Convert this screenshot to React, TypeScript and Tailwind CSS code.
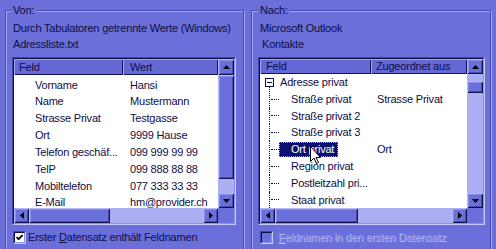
type Dir = "up" | "down" | "left" | "right";

function Arrow({ dir }: { dir: Dir }) {
  if (dir === "up" || dir === "down") {
    return (
      <svg width="7" height="4" viewBox="0 0 7 4">
        <polygon points={dir === "up" ? "3.5,0 7,4 0,4" : "0,0 7,0 3.5,4"} fill="#000" />
      </svg>
    );
  }
  return (
    <svg width="4" height="7" viewBox="0 0 4 7">
      <polygon points={dir === "left" ? "4,0 4,7 0,3.5" : "0,0 4,3.5 0,7"} fill="#000" />
    </svg>
  );
}

function ScrollButton({ dir, className }: { dir: Dir; className: string }) {
  return (
    <div
      className={`flex shrink-0 items-center justify-center bg-[#6b6fd9] shadow-[inset_1px_1px_0_#b3b6f6,inset_-1px_-1px_0_#12124e,inset_2px_2px_0_#8a8de8,inset_-2px_-2px_0_#474bb0] ${className}`}
    >
      <Arrow dir={dir} />
    </div>
  );
}

function Thumb({ className }: { className: string }) {
  return (
    <div
      className={`shrink-0 bg-[#6b6fd9] shadow-[inset_1px_1px_0_#b3b6f6,inset_-1px_-1px_0_#12124e,inset_2px_2px_0_#8a8de8,inset_-2px_-2px_0_#474bb0] ${className}`}
    />
  );
}

function ListFrame({
  width,
  vthumb,
  hthumb,
  children,
}: {
  width: string;
  vthumb: React.ReactNode;
  hthumb: React.ReactNode;
  children: React.ReactNode;
}) {
  return (
    <div
      className={`h-[168px] border border-t-[#4347ad] border-l-[#4347ad] border-r-[#c6c8f8] border-b-[#c6c8f8] ${width}`}
    >
      <div className="flex h-full flex-col border border-t-[#0d0d45] border-l-[#0d0d45] border-r-[#8d90e8] border-b-[#8d90e8] bg-white">
        <div className="flex min-h-0 flex-1">
          <div className="min-w-0 flex-1 overflow-hidden">{children}</div>
          <div className="flex w-[16px] flex-col bg-[#abaef2]">{vthumb}</div>
        </div>
        <div className="flex h-[15px]">
          <div className="flex flex-1 bg-[#abaef2]">{hthumb}</div>
          <div className="w-[16px] bg-[#6b6fd9]" />
        </div>
      </div>
    </div>
  );
}

function HeaderCell({ className, children }: { className: string; children: React.ReactNode }) {
  return (
    <div
      className={`h-full shrink-0 bg-[#6569d6] shadow-[inset_1px_1px_0_#a2a5f2,inset_-1px_-1px_0_#14145a] ${className}`}
    >
      {children}
    </div>
  );
}

function CheckBox({ checked, disabled }: { checked?: boolean; disabled?: boolean }) {
  return (
    <div className="h-[13px] w-[13px] shrink-0 border border-t-[#4347ad] border-l-[#4347ad] border-r-[#c6c8f8] border-b-[#c6c8f8]">
      <div
        className={`flex h-full w-full items-center justify-center border border-t-[#0d0d45] border-l-[#0d0d45] border-r-[#8d90e8] border-b-[#8d90e8] ${
          disabled ? "bg-[#6b6fd9]" : "bg-white"
        }`}
      >
        {checked && (
          <svg width="7" height="7" viewBox="0 0 7 7">
            <polyline points="0.6,3 2.6,5.2 6.6,1" fill="none" stroke="#000" strokeWidth="1.8" />
          </svg>
        )}
      </div>
    </div>
  );
}

const leftRows = [
  ["Vorname", "Hansi"],
  ["Name", "Mustermann"],
  ["Strasse Privat", "Testgasse"],
  ["Ort", "9999 Hause"],
  ["Telefon geschäf...", "099 999 99 99"],
  ["TelP", "099 888 88 88"],
  ["Mobiltelefon", "077 333 33 33"],
  ["E-Mail", "hm@provider.ch"],
];

const treeRows = [
  ["Straße privat", "Strasse Privat"],
  ["Straße privat 2", ""],
  ["Straße privat 3", ""],
  ["Ort privat", "Ort"],
  ["Region privat", ""],
  ["Postleitzahl pri...", ""],
  ["Staat privat", ""],
];

export default function App() {
  return (
    <div className="relative flex h-[249px] w-[496px] gap-[7px] overflow-hidden bg-[#6b6fd9] pl-[5px] pt-[10px] font-['Liberation_Sans',Arial,sans-serif] text-[11px] leading-[16px] tracking-[-0.2px] text-[#0e0e46]">
      {/* Von */}
      <div className="relative h-[260px] w-[239px] shrink-0 border border-[#474bb2] px-[6px] pt-[9px] shadow-[inset_1px_1px_0_#a6a9f4,1px_1px_0_#a6a9f4]">
        <span className="absolute -top-[7px] left-[5px] bg-[#6b6fd9] px-[2px] leading-[13px]">Von:</span>
        <div className="pl-[1px]">Durch Tabulatoren getrennte Werte (Windows)</div>
        <div className="pl-[1px]">Adressliste.txt</div>
        <div className="mt-[5px]">
          <ListFrame
            width="w-[224px]"
            vthumb={
              <>
                <ScrollButton dir="up" className="h-[16px]" />
                <Thumb className="h-[104px]" />
                <div className="flex-1" />
                <ScrollButton dir="down" className="h-[15px]" />
              </>
            }
            hthumb={
              <>
                <ScrollButton dir="left" className="w-[15px]" />
                <Thumb className="w-[81px]" />
                <div className="flex-1" />
                <ScrollButton dir="right" className="w-[15px]" />
              </>
            }
          >
            <div className="flex h-[16px] whitespace-nowrap">
              <HeaderCell className="w-[109px] pl-[5px]">Feld</HeaderCell>
              <HeaderCell className="flex-1 pl-[7px]">Wert</HeaderCell>
            </div>
            <div className="pt-[1.5px]">
              {leftRows.map(([f, w]) => (
                <div key={f} className="flex h-[16.85px] whitespace-nowrap leading-[16.85px]">
                  <div className="w-[109px] shrink-0 pl-[21px]">{f}</div>
                  <div className="pl-[7px]">{w}</div>
                </div>
              ))}
            </div>
          </ListFrame>
        </div>
        <div className="mt-[4px] flex h-[16px] items-center">
          <div className="ml-[1px]">
            <CheckBox checked />
          </div>
          <span className="ml-[2px] whitespace-nowrap">
            Erster <span className="underline">D</span>atensatz enthält Feldnamen
          </span>
        </div>
      </div>

      {/* Nach */}
      <div className="relative h-[260px] w-[240px] shrink-0 border border-[#474bb2] px-[6px] pt-[9px] shadow-[inset_1px_1px_0_#a6a9f4,1px_1px_0_#a6a9f4]">
        <span className="absolute -top-[7px] left-[6px] bg-[#6b6fd9] px-[2px] leading-[13px]">Nach:</span>
        <div className="pl-[2px]">Microsoft Outlook</div>
        <div className="pl-[4px]">Kontakte</div>
        <div className="mt-[5px]">
          <ListFrame
            width="w-[227px]"
            vthumb={
              <>
                <ScrollButton dir="up" className="h-[15px]" />
                <div className="h-[7px] shrink-0" />
                <Thumb className="h-[12px]" />
                <div className="flex-1" />
                <ScrollButton dir="down" className="h-[15px]" />
              </>
            }
            hthumb={
              <>
                <ScrollButton dir="left" className="w-[15px]" />
                <Thumb className="w-[83px]" />
                <div className="flex-1" />
                <ScrollButton dir="right" className="w-[15px]" />
              </>
            }
          >
            <div className="flex h-[15px] whitespace-nowrap leading-[15px]">
              <HeaderCell className="w-[111px] pl-[6px]">Feld</HeaderCell>
              <HeaderCell className="flex-1 pl-[5px]">Zugeordnet aus</HeaderCell>
            </div>
            <div className="flex h-[16.8px] items-center whitespace-nowrap leading-[16.8px]">
              <div className="relative ml-[5px] flex h-[9px] w-[9px] shrink-0 items-center justify-center border border-[#0e0e46]">
                <div className="h-px w-[5px] bg-[#0e0e46]" />
                <div className="absolute left-[3px] top-[8px] h-[5px] border-l border-dotted border-[#0e0e46]" />
              </div>
              <span className="ml-[6px]">Adresse privat</span>
            </div>
            {treeRows.map(([f, z]) => {
              const sel = f === "Ort privat";
              return (
                <div key={f} className="flex h-[16.8px] items-center whitespace-nowrap leading-[16.8px]">
                  <div className="w-[9px] shrink-0" />
                  <div className="flex h-full w-[10px] shrink-0 items-center border-l border-dotted border-[#0e0e46]">
                    <div className="ml-[1px] w-[8px] border-t border-dotted border-[#0e0e46]" />
                  </div>
                  <div className="w-[92px] shrink-0">
                    <span
                      className={`inline-block h-[15px] pl-[12px] pr-[4px] leading-[15px] ${
                        sel ? "bg-[#0b0f6e] text-white outline-1 -outline-offset-1 outline-dotted outline-[#9a9df0]" : ""
                      }`}
                    >
                      {f}
                    </span>
                  </div>
                  <div className="pl-[6px]">{z}</div>
                </div>
              );
            })}
          </ListFrame>
        </div>
        <div className="mt-[4px] flex h-[16px] items-center">
          <div className="ml-[2px]">
            <CheckBox disabled />
          </div>
          <span className="ml-[5px] whitespace-nowrap text-[#8286e0] [text-shadow:1px_1px_0_#b9bcf7]">
            <span className="underline">F</span>eldnamen in den ersten Datensatz
          </span>
        </div>
      </div>

      {/* mouse pointer */}
      <svg className="absolute left-[310px] top-[146px]" width="12" height="20" viewBox="0 0 12 20">
        <path
          d="M0.5,0.5 V15.5 L4,12 L6.5,17.5 L8.5,16.5 L6,11.5 H10.5 Z"
          fill="#fff"
          stroke="#000"
          strokeWidth="1"
        />
      </svg>
    </div>
  );
}
